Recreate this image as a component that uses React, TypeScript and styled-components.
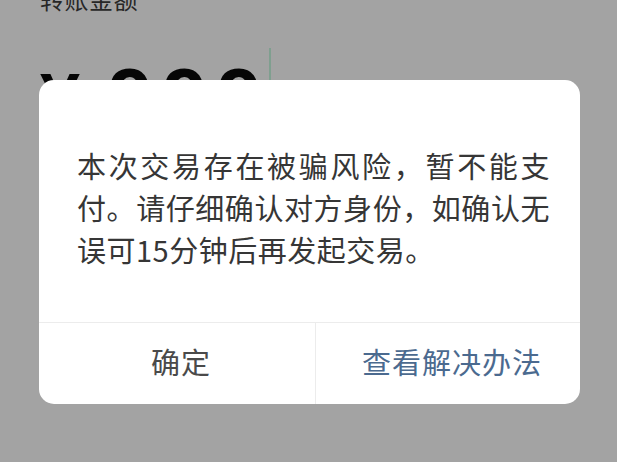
import React from "react";
import styled, { createGlobalStyle } from "styled-components";

const GlobalStyle = createGlobalStyle`
  html, body {
    margin: 0;
    padding: 0;
    background: #a3a3a3;
  }
  body {
    font-family: "Noto Sans CJK SC", "Noto Sans", sans-serif;
    overflow: hidden;
  }
`;

const Page = styled.div`
  position: relative;
  width: 617px;
  height: 462px;
  overflow: hidden;
  background: #a3a3a3;
  padding-left: 40px;
  box-sizing: border-box;
  display: flex;
  flex-direction: column;
`;

const Label = styled.div`
  margin-top: -13px;
  font-size: 24px;
  line-height: 24px;
  color: #272727;
  letter-spacing: 0.5px;
`;

const AmountRow = styled.div`
  margin-top: 46px;
  display: flex;
  align-items: flex-start;
  font-family: "Liberation Sans", Arial, sans-serif;
  font-weight: 700;
  color: #060606;
  line-height: 80px;
`;

const Currency = styled.span`
  font-size: 72px;
  margin-top: 2px;
`;

const Digits = styled.span`
  font-size: 80px;
  letter-spacing: 10px;
  margin-left: 28px;
`;

const Cursor = styled.span`
  width: 2px;
  height: 72px;
  margin-top: -9px;
  margin-left: -3px;
  background: #7f9f8f;
`;

const Overlay = styled.div`
  position: absolute;
  inset: 0;
  display: flex;
  align-items: flex-start;
  justify-content: flex-start;
  padding: 80px 0 0 39px;
`;

const Dialog = styled.div`
  width: 541px;
  height: 324px;
  background: #ffffff;
  border-radius: 15px;
  display: flex;
  flex-direction: column;
  overflow: hidden;
`;

const Message = styled.div`
  flex: 1;
  padding: 64px 30px 0 38px;
  font-size: 29px;
  line-height: 42px;
  letter-spacing: 0.5px;
  text-align: justify;
  color: #363636;
`;

const Actions = styled.div`
  height: 81px;
  border-top: 1px solid #ececec;
  display: grid;
  grid-template-columns: 276px 1fr;
`;

const ActionButton = styled.button<{ $primary?: boolean }>`
  border: none;
  background: transparent;
  margin: 0;
  padding: 0 0 6px 8px;
  font-family: "Noto Sans CJK SC", "Noto Sans", sans-serif;
  font-size: 29px;
  letter-spacing: 1px;
  color: ${(p) => (p.$primary ? "#4b6a8f" : "#4a4a4a")};
  border-left: ${(p) => (p.$primary ? "1px solid #ececec" : "none")};
  display: flex;
  align-items: center;
  justify-content: center;
  cursor: pointer;
`;

export default function App() {
  return (
    <>
      <GlobalStyle />
      <Page>
        <Label>转账金额</Label>
        <AmountRow>
          <Currency>¥</Currency>
          <Digits>999</Digits>
          <Cursor />
        </AmountRow>
        <Overlay>
          <Dialog>
            <Message>
              本次交易存在被骗风险，暂不能支付。请仔细确认对方身份，如确认无误可15分钟后再发起交易。
            </Message>
            <Actions>
              <ActionButton>确定</ActionButton>
              <ActionButton $primary>查看解决办法</ActionButton>
            </Actions>
          </Dialog>
        </Overlay>
      </Page>
    </>
  );
}
